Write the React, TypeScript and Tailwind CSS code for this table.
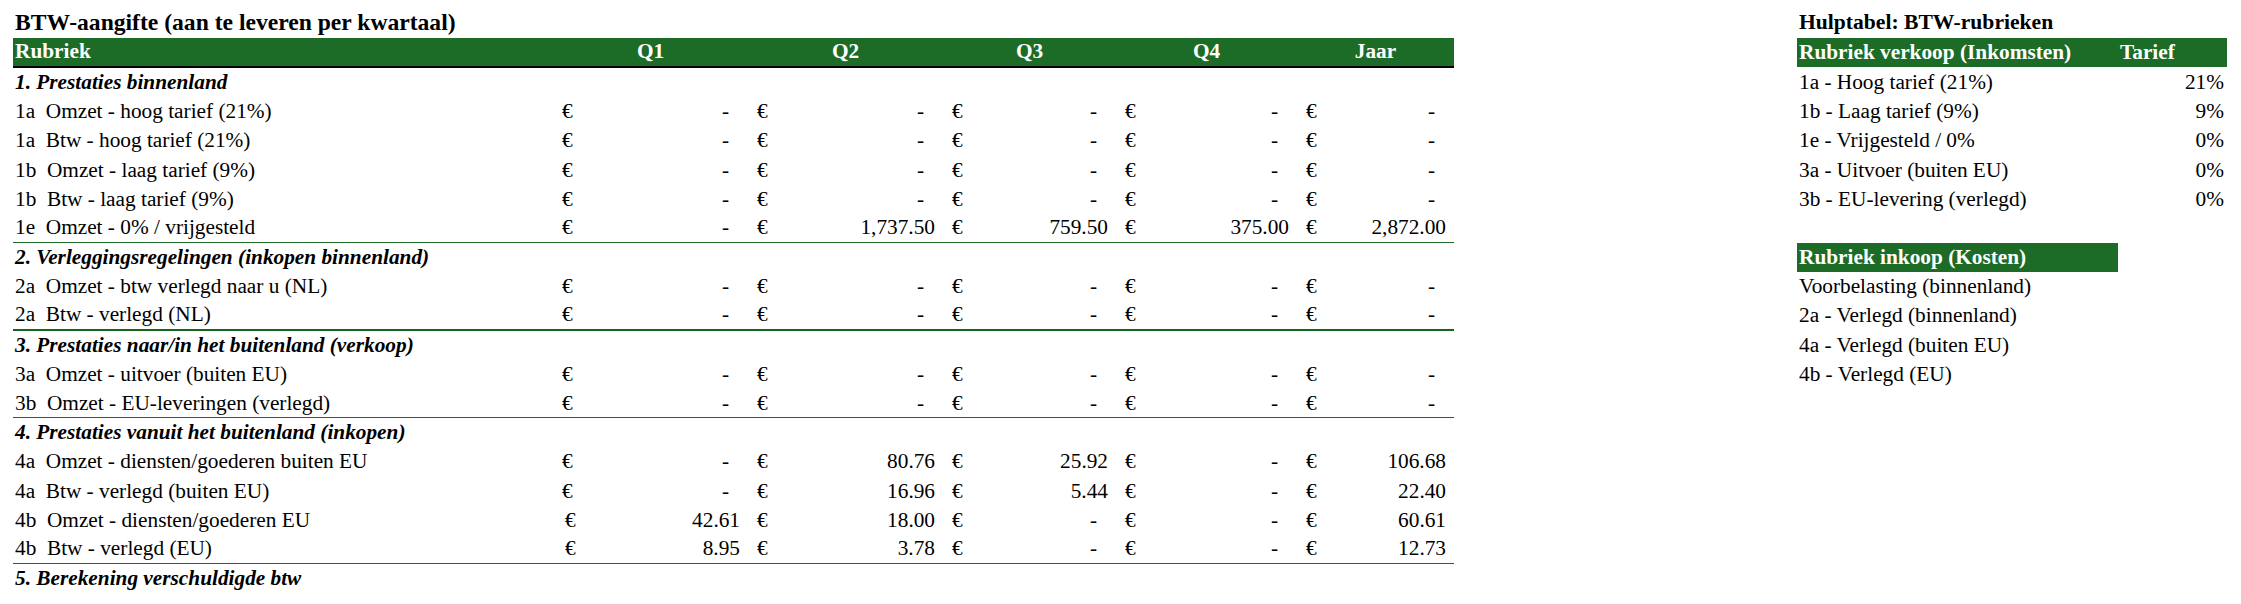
type DataRow = {
  kind: 'data'
  code: string
  label: string
  values: string[]
  line?: 'thin' | 'thick'
  shift?: boolean
}

type SectionRow = {
  kind: 'section'
  label: string
}

type Row = DataRow | SectionRow

const DASHES = ['-', '-', '-', '-', '-']

const ROWS: Row[] = [
  { kind: 'section', label: '1. Prestaties binnenland' },
  { kind: 'data', code: '1a', label: 'Omzet - hoog tarief (21%)', values: DASHES },
  { kind: 'data', code: '1a', label: 'Btw - hoog tarief (21%)', values: DASHES },
  { kind: 'data', code: '1b', label: 'Omzet - laag tarief (9%)', values: DASHES },
  { kind: 'data', code: '1b', label: 'Btw - laag tarief (9%)', values: DASHES },
  {
    kind: 'data',
    code: '1e',
    label: 'Omzet - 0% / vrijgesteld',
    values: ['-', '1,737.50', '759.50', '375.00', '2,872.00'],
    line: 'thin'
  },
  { kind: 'section', label: '2. Verleggingsregelingen (inkopen binnenland)' },
  { kind: 'data', code: '2a', label: 'Omzet - btw verlegd naar u (NL)', values: DASHES },
  { kind: 'data', code: '2a', label: 'Btw - verlegd (NL)', values: DASHES, line: 'thick' },
  { kind: 'section', label: '3. Prestaties naar/in het buitenland (verkoop)' },
  { kind: 'data', code: '3a', label: 'Omzet - uitvoer (buiten EU)', values: DASHES },
  { kind: 'data', code: '3b', label: 'Omzet - EU-leveringen (verlegd)', values: DASHES, line: 'thin' },
  { kind: 'section', label: '4. Prestaties vanuit het buitenland (inkopen)' },
  {
    kind: 'data',
    code: '4a',
    label: 'Omzet - diensten/goederen buiten EU',
    values: ['-', '80.76', '25.92', '-', '106.68']
  },
  {
    kind: 'data',
    code: '4a',
    label: 'Btw - verlegd (buiten EU)',
    values: ['-', '16.96', '5.44', '-', '22.40']
  },
  {
    kind: 'data',
    code: '4b',
    label: 'Omzet - diensten/goederen EU',
    values: ['42.61', '18.00', '-', '-', '60.61'],
    shift: true
  },
  {
    kind: 'data',
    code: '4b',
    label: 'Btw - verlegd (EU)',
    values: ['8.95', '3.78', '-', '-', '12.73'],
    shift: true,
    line: 'thin'
  },
  { kind: 'section', label: '5. Berekening verschuldigde btw' }
]

// widths of Q1..Jaar
const MONEY_WIDTHS = ['w-[195px]', 'w-[195px]', 'w-[173px]', 'w-[181px]', 'w-[157px]']
const HEADERS = ['Q1', 'Q2', 'Q3', 'Q4', 'Jaar']

type HelpRow =
  | { kind: 'row'; label: string; rate?: string }
  | { kind: 'head'; label: string }
  | { kind: 'empty' }

const HELP_ROWS: HelpRow[] = [
  { kind: 'row', label: '1a - Hoog tarief (21%)', rate: '21%' },
  { kind: 'row', label: '1b - Laag tarief (9%)', rate: '9%' },
  { kind: 'row', label: '1e - Vrijgesteld / 0%', rate: '0%' },
  { kind: 'row', label: '3a - Uitvoer (buiten EU)', rate: '0%' },
  { kind: 'row', label: '3b - EU-levering (verlegd)', rate: '0%' },
  { kind: 'empty' },
  { kind: 'head', label: 'Rubriek inkoop (Kosten)' },
  { kind: 'row', label: 'Voorbelasting (binnenland)' },
  { kind: 'row', label: '2a - Verlegd (binnenland)' },
  { kind: 'row', label: '4a - Verlegd (buiten EU)' },
  { kind: 'row', label: '4b - Verlegd (EU)' }
]

function MoneyCell({ value, width, shift }: { value: string; width: string; shift?: boolean }) {
  return (
    <div className={`${width} flex items-center justify-between pr-[8px] ${shift ? 'pl-[12px]' : 'pl-[9px]'}`}>
      <span>€</span>
      {value === '-' ? <span className="pr-[11px]">-</span> : <span>{value}</span>}
    </div>
  )
}

function TableRow({ row }: { row: Row }) {
  if (row.kind === 'section') {
    return (
      <div className="flex h-[29.2px] items-center pl-[2px] font-bold italic">{row.label}</div>
    )
  }
  const line =
    row.line === 'thick'
      ? 'border-b-2 border-[#17641f]'
      : row.line === 'thin'
        ? 'border-b border-[#1d6a25]'
        : ''
  return (
    <div className={`flex h-[29.2px] items-center ${line}`}>
      <div className="w-[540px] whitespace-pre pl-[2px]">
        {row.code}
        {'  '}
        {row.label}
      </div>
      {row.values.map((value, index) => (
        <MoneyCell
          key={index}
          value={value}
          width={MONEY_WIDTHS[index]}
          shift={row.shift && index === 0}
        />
      ))}
    </div>
  )
}

export default function App() {
  return (
    <div
      className="flex min-h-[604px] items-start bg-white pl-[13px] pt-[8px] text-[21.3px] leading-none text-black"
      style={{ fontFamily: '"Liberation Serif", "Times New Roman", serif' }}
    >
      <div className="w-[1441px]">
        <div className="flex h-[30px] items-center pl-[2px] text-[23.6px] font-bold">
          BTW-aangifte (aan te leveren per kwartaal)
        </div>
        <div className="flex h-[30px] items-center border-b-2 border-black bg-[#1c6b27] font-bold text-white">
          <div className="w-[540px] pl-[2px]">Rubriek</div>
          {HEADERS.map((header, index) => (
            <div key={header} className={`${MONEY_WIDTHS[index]} text-center`}>
              {header}
            </div>
          ))}
        </div>
        {ROWS.map((row, index) => (
          <TableRow key={index} row={row} />
        ))}
      </div>

      <div className="ml-[343px] w-[430px]">
        <div className="flex h-[30px] items-center pl-[2px] text-[21.6px] font-bold">
          Hulptabel: BTW-rubrieken
        </div>
        <div className="flex h-[29px] items-center bg-[#1c6b27] font-bold text-white">
          <div className="w-[321px] pl-[2px]">Rubriek verkoop (Inkomsten)</div>
          <div className="w-[109px] pl-[2px]">Tarief</div>
        </div>
        <div className="h-px" />
        {HELP_ROWS.map((row, index) => {
          if (row.kind === 'empty') {
            return <div key={index} className="h-[29.2px]" />
          }
          if (row.kind === 'head') {
            return (
              <div key={index} className="flex h-[29.2px] items-center">
                <div className="flex h-[29px] w-[321px] items-center bg-[#1c6b27] pl-[2px] font-bold text-white">
                  {row.label}
                </div>
              </div>
            )
          }
          return (
            <div key={index} className="flex h-[29.2px] items-center">
              <div className="w-[321px] pl-[2px]">{row.label}</div>
              <div className="w-[109px] pr-[3px] text-right">{row.rate}</div>
            </div>
          )
        })}
      </div>
    </div>
  )
}
